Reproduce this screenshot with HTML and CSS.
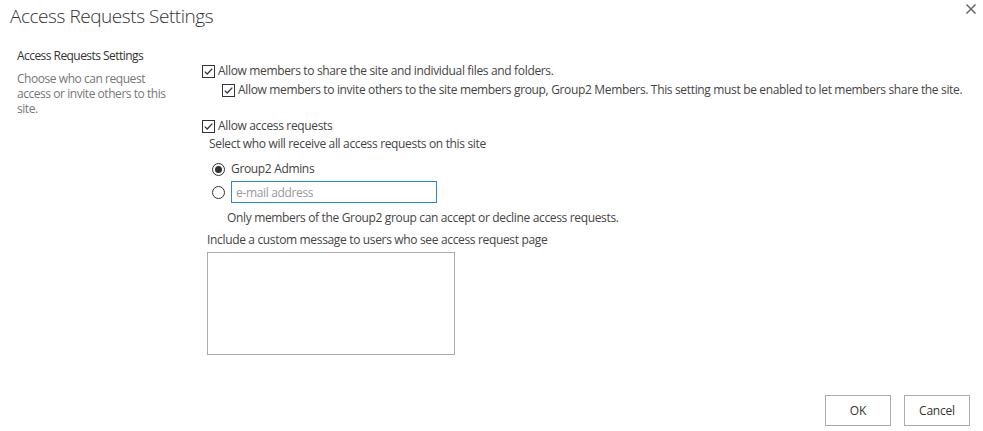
FILE: index.html
```html
<!DOCTYPE html>
<html lang="en">
<head>
<meta charset="utf-8">
<title>Access Requests Settings</title>
<link rel="stylesheet" href="styles.css">
</head>
<body>
<div class="dialog">
  <header class="titlebar">
    <h1 class="title">Access Requests Settings</h1>
    <button class="close" aria-label="Close">
      <svg width="10" height="10" viewBox="0 0 10 10"><path d="M0.5 0.5L9.5 9.5M9.5 0.5L0.5 9.5" stroke="#666" stroke-width="1.5" fill="none"/></svg>
    </button>
  </header>
  <div class="content">
    <aside class="info">
      <h2 class="info-title">Access Requests Settings</h2>
      <p class="info-desc">Choose who can request access or invite others to this site.</p>
    </aside>
    <div class="body">
      <label class="row row-share"><span class="cb"><svg width="13" height="13" viewBox="0 0 13 13"><rect x="0.5" y="0.5" width="12" height="12" fill="#fff" stroke="#333"/><path d="M2.8 6.6L5.2 9L10.3 3.6" stroke="#333" stroke-width="1.3" fill="none"/></svg></span>Allow members to share the site and individual files and folders.</label>
      <label class="row row-invite"><span class="cb"><svg width="13" height="13" viewBox="0 0 13 13"><rect x="0.5" y="0.5" width="12" height="12" fill="#fff" stroke="#333"/><path d="M2.8 6.6L5.2 9L10.3 3.6" stroke="#333" stroke-width="1.3" fill="none"/></svg></span>Allow members to invite others to the site members group, Group2 Members. This setting must be enabled to let members share the site.</label>
      <label class="row row-access"><span class="cb"><svg width="13" height="13" viewBox="0 0 13 13"><rect x="0.5" y="0.5" width="12" height="12" fill="#fff" stroke="#333"/><path d="M2.8 6.6L5.2 9L10.3 3.6" stroke="#333" stroke-width="1.3" fill="none"/></svg></span>Allow access requests</label>
      <p class="hint hint-select">Select who will receive all access requests on this site</p>
      <label class="radio-row radio-admins"><span class="rb"><svg width="13" height="13" viewBox="0 0 13 13"><circle cx="6.5" cy="6.5" r="6" fill="#fff" stroke="#333"/><circle cx="6.5" cy="6.5" r="3.5" fill="#333"/></svg></span>Group2 Admins</label>
      <div class="radio-row radio-email"><span class="rb"><svg width="13" height="13" viewBox="0 0 13 13"><circle cx="6.5" cy="6.5" r="6" fill="#fff" stroke="#333"/></svg></span><input class="email" type="text" placeholder="e-mail address"></div>
      <p class="hint hint-only">Only members of the Group2 group can accept or decline access requests.</p>
      <p class="hint hint-include">Include a custom message to users who see access request page</p>
      <textarea class="message"></textarea>
    </div>
  </div>
  <footer class="actions">
    <button class="btn">OK</button>
    <button class="btn">Cancel</button>
  </footer>
</div>
</body>
</html>
```

FILE: styles.css
```css
html, body {
  margin: 0;
  padding: 0;
  background: #fff;
}
body {
  font-family: "Open Sans", "Noto Sans", sans-serif;
  font-size: 12px;
  letter-spacing: -0.34px;
  color: #444;
  width: 983px;
  height: 431px;
  overflow: hidden;
}
.dialog {
  display: flex;
  flex-direction: column;
}
.titlebar {
  display: flex;
  justify-content: space-between;
  align-items: flex-start;
  height: 40px;
}
.title {
  margin: 0;
  padding: 2px 0 0 10px;
  font-size: 19px;
  font-weight: 300;
  letter-spacing: -0.45px;
  line-height: 28px;
  color: #333;
}
.close {
  border: 0;
  background: none;
  padding: 0;
  margin: 4px 7px 0 0;
  width: 10px;
  height: 10px;
  display: flex;
}
.content {
  display: flex;
}
.info {
  flex: 0 0 202px;
  width: 202px;
  padding-left: 17px;
  box-sizing: border-box;
}
.info-title {
  margin: 8px 0 0 0;
  font-size: 12px;
  font-weight: 400;
  letter-spacing: -0.55px;
  line-height: 16px;
  color: #333;
}
.info-desc {
  margin: 7px 0 0 0;
  width: 155px;
  font-size: 12px;
  letter-spacing: -0.45px;
  line-height: 15px;
  color: #777;
}
.body {
  display: flex;
  flex-direction: column;
  align-items: flex-start;
  padding-top: 22px;
}
.row {
  display: flex;
  align-items: center;
  line-height: 18px;
  height: 18px;
  white-space: nowrap;
}
.cb, .rb {
  display: flex;
  flex: 0 0 13px;
  width: 13px;
  height: 13px;
  margin-right: 3px;
}
.row-invite {
  margin-left: 20px;
  margin-top: 1px;
}
.row-access {
  margin-top: 18px;
}
.hint {
  margin: 0;
  line-height: 17px;
  white-space: nowrap;
}
.hint-select {
  margin-left: 7px;
}
.radio-row {
  display: flex;
  align-items: center;
  margin-left: 10px;
}
.radio-row .rb {
  margin-right: 6px;
}
.radio-admins {
  margin-top: 8px;
  line-height: 18px;
}
.radio-email {
  margin-top: 3px;
}
.email {
  width: 206px;
  height: 22px;
  box-sizing: border-box;
  border: 1px solid #2b88d8;
  padding: 0 4px;
  font-family: inherit;
  font-size: 12px;
  letter-spacing: -0.34px;
  color: #444;
  outline: none;
}
.email::placeholder {
  color: #999;
}
.hint-only {
  margin-left: 25px;
  margin-top: 6px;
}
.hint-include {
  margin-left: 5px;
  margin-top: 5px;
}
.message {
  margin: 4px 0 0 5px;
  width: 248px;
  height: 103px;
  box-sizing: border-box;
  border: 1px solid #ababab;
  resize: none;
  padding: 0;
}
.actions {
  display: flex;
  justify-content: flex-end;
  gap: 13px;
  padding-right: 13px;
  margin-top: 40px;
}
.btn {
  width: 66px;
  height: 31px;
  box-sizing: border-box;
  border: 1px solid #ababab;
  background: #fff;
  font-family: inherit;
  font-size: 12px;
  letter-spacing: -0.2px;
  color: #333;
  padding: 0;
}
```
